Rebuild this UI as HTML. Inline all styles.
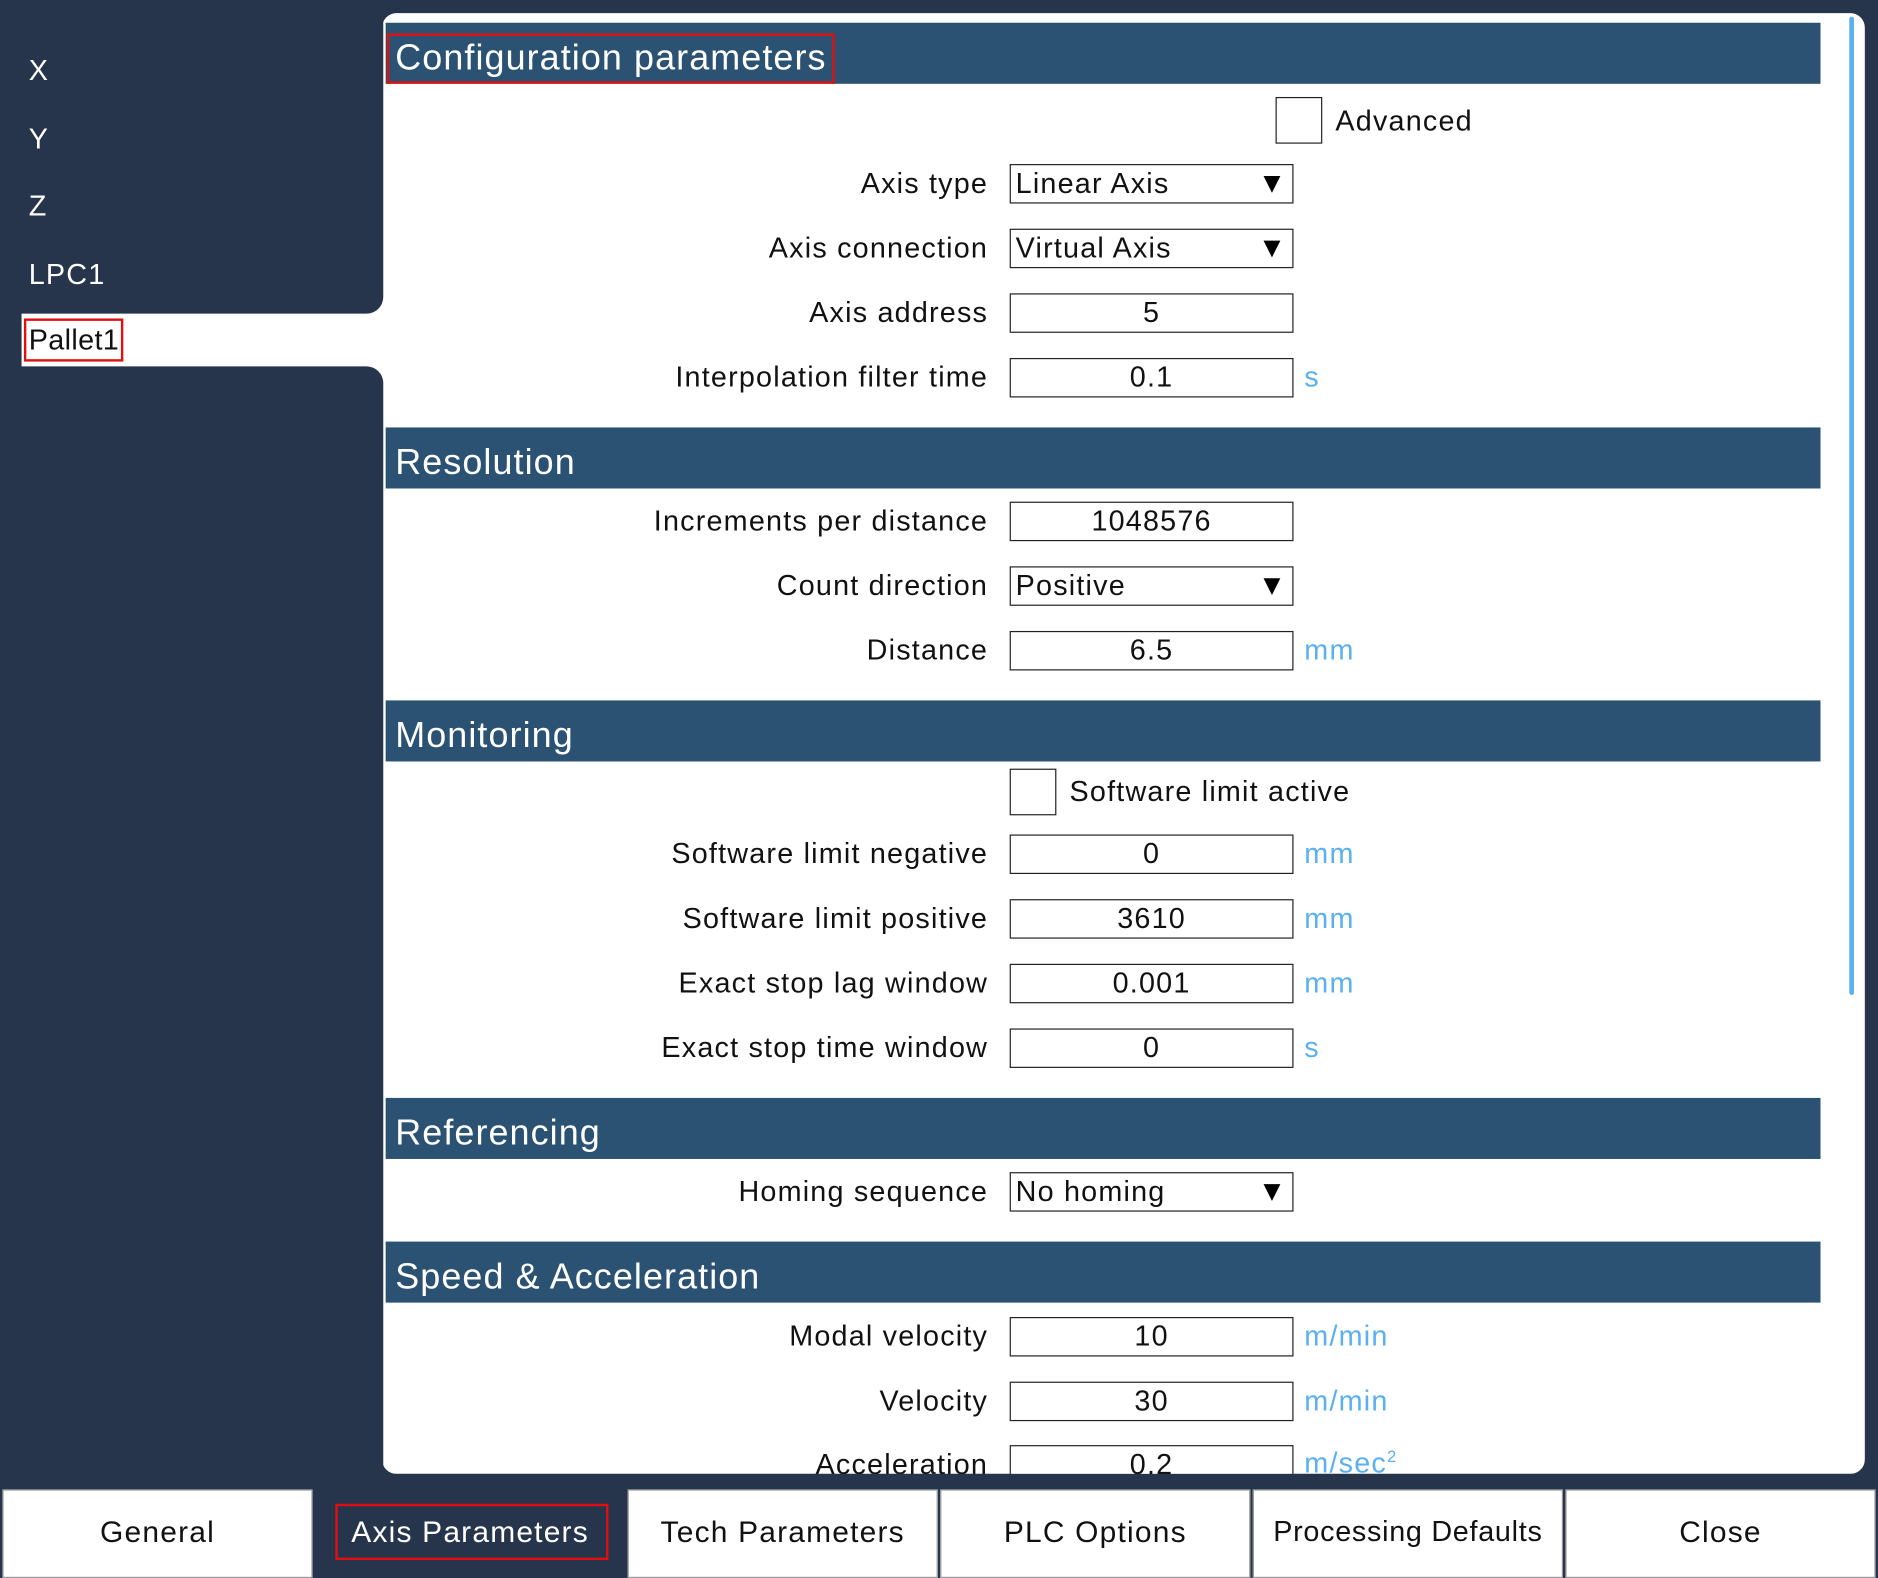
<!DOCTYPE html>
<html><head><meta charset="utf-8">
<style>
html,body{margin:0;padding:0;width:1878px;height:1578px;overflow:hidden;background:#26354c;}
#w{position:absolute;left:0;top:0;width:1568px;height:1318px;transform:scale(1.19770,1.19727);transform-origin:0 0;font-family:"Liberation Sans",sans-serif;background:#26354c;letter-spacing:1px;}
.a{position:absolute;}
.side{color:#fff;font-size:24px;left:24px;}
.hdr{position:absolute;left:322px;width:1198px;height:51px;background:#2b5272;color:#fff;font-size:30px;line-height:60px;padding-left:8px;box-sizing:border-box;letter-spacing:0.9px;}
.lbl{position:absolute;right:743px;font-size:24px;color:#111;white-space:nowrap;}
.box{position:absolute;left:843px;width:237px;height:33px;border:1.5px solid #222;box-sizing:border-box;font-size:24px;line-height:31px;color:#111;background:#fff;}
.c{text-align:center;}
.sel{padding-left:4px;}
.sel:after{content:"";position:absolute;right:10px;top:9px;border-left:7px solid transparent;border-right:7px solid transparent;border-top:14px solid #000;}
.u{position:absolute;left:1089px;font-size:24px;color:#5ab0f0;}
.cb{position:absolute;width:39px;height:39px;border:1.5px solid #222;box-sizing:border-box;background:#fff;}
.tab{position:absolute;top:1244px;height:74px;width:259px;background:#fff;border:1.5px solid #999;box-sizing:border-box;font-size:25px;color:#111;text-align:center;line-height:70px;}
</style></head><body><div id="w">
<div class="a" style="left:319px;top:11px;width:1238px;height:1220px;background:#fff;border-radius:12px;overflow:hidden;"></div>
<div class="a" style="left:1544px;top:14px;width:4px;height:817px;background:#5ab0f0;border-radius:2px;"></div>
<div class="a" style="left:18px;top:250px;width:330px;height:68px;background:#fff;"></div>
<div class="a" style="left:0;top:0;width:320px;height:262px;background:#26354c;border-bottom-right-radius:14px;"></div>
<div class="a" style="left:0;top:306px;width:320px;height:940px;background:#26354c;border-top-right-radius:14px;"></div>
<div class="a side" style="top:46px">X</div>
<div class="a side" style="top:103px">Y</div>
<div class="a side" style="top:159px">Z</div>
<div class="a side" style="top:216px">LPC1</div>
<div class="a" style="left:20px;top:266px;width:83px;height:36px;border:2.5px solid #e01010;box-sizing:border-box;"></div>
<div class="a" style="left:24px;top:271px;font-size:24px;color:#111;letter-spacing:0.3px">Pallet1</div>

<div class="hdr" style="top:19px">Configuration parameters</div>
<div class="a" style="left:323px;top:28px;width:374px;height:42px;border:2.5px solid #e01010;box-sizing:border-box;"></div>
<div class="cb" style="left:1065px;top:81px"></div>
<div class="a" style="left:1115px;top:88px;font-size:24px;color:#111">Advanced</div>

<div class="lbl" style="top:140px">Axis type</div><div class="box sel" style="top:137px">Linear Axis</div>
<div class="lbl" style="top:194px">Axis connection</div><div class="box sel" style="top:191px">Virtual Axis</div>
<div class="lbl" style="top:248px">Axis address</div><div class="box c" style="top:245px">5</div>
<div class="lbl" style="top:302px">Interpolation filter time</div><div class="box c" style="top:299px">0.1</div><div class="u" style="top:302px">s</div>

<div class="hdr" style="top:357px">Resolution</div>
<div class="lbl" style="top:422px">Increments per distance</div><div class="box c" style="top:419px">1048576</div>
<div class="lbl" style="top:476px">Count direction</div><div class="box sel" style="top:473px">Positive</div>
<div class="lbl" style="top:530px">Distance</div><div class="box c" style="top:527px">6.5</div><div class="u" style="top:530px">mm</div>

<div class="hdr" style="top:585px">Monitoring</div>
<div class="cb" style="left:843px;top:642px"></div>
<div class="a" style="left:893px;top:648px;font-size:24px;color:#111">Software limit active</div>
<div class="lbl" style="top:700px">Software limit negative</div><div class="box c" style="top:697px">0</div><div class="u" style="top:700px">mm</div>
<div class="lbl" style="top:754px">Software limit positive</div><div class="box c" style="top:751px">3610</div><div class="u" style="top:754px">mm</div>
<div class="lbl" style="top:808px">Exact stop lag window</div><div class="box c" style="top:805px">0.001</div><div class="u" style="top:808px">mm</div>
<div class="lbl" style="top:862px">Exact stop time window</div><div class="box c" style="top:859px">0</div><div class="u" style="top:862px">s</div>

<div class="hdr" style="top:917px">Referencing</div>
<div class="lbl" style="top:982px">Homing sequence</div><div class="box sel" style="top:979px">No homing</div>

<div class="hdr" style="top:1037px">Speed &amp; Acceleration</div>
<div class="lbl" style="top:1103px">Modal velocity</div><div class="box c" style="top:1100px">10</div><div class="u" style="top:1103px">m/min</div>
<div class="lbl" style="top:1157px">Velocity</div><div class="box c" style="top:1154px">30</div><div class="u" style="top:1157px">m/min</div>
<div class="lbl" style="top:1210px">Acceleration</div><div class="box c" style="top:1207px">0.2</div><div class="u" style="top:1208px">m/sec<sup style="font-size:14px">2</sup></div>
<div class="a" style="left:0;top:1231px;width:1568px;height:13px;background:#26354c;"></div>

<div class="tab" style="left:2px">General</div>
<div class="tab" style="left:263px;background:#26354c;border-color:#26354c;color:#fff;">Axis Parameters</div>
<div class="a" style="left:280px;top:1256px;width:228px;height:47px;border:2.5px solid #e01010;box-sizing:border-box;"></div>
<div class="tab" style="left:524px">Tech Parameters</div>
<div class="tab" style="left:785px">PLC Options</div>
<div class="tab" style="left:1046px;font-size:24px;letter-spacing:0.6px">Processing Defaults</div>
<div class="tab" style="left:1307px">Close</div>
</div></body></html>
